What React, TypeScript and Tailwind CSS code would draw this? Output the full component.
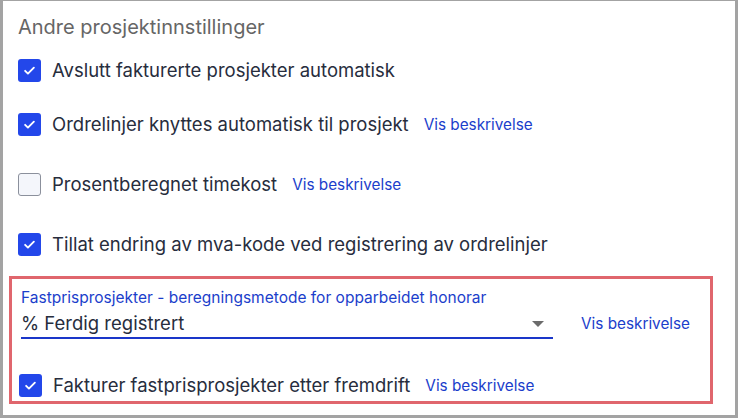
import React, { useState } from 'react';

const CheckIcon = () => (
  <svg viewBox="0 0 24 24" className="w-[15px] h-[15px]" fill="none" stroke="white" strokeWidth={3} strokeLinecap="round" strokeLinejoin="round">
    <path d="M5 12.5l4.5 4.5L19 7.5" />
  </svg>
);

interface CheckRowProps {
  label: string;
  checked: boolean;
  onToggle: () => void;
  showLink?: boolean;
  className?: string;
}

const CheckRow: React.FC<CheckRowProps> = ({ label, checked, onToggle, showLink, className }) => (
  <div className={`flex items-center ${className ?? ''}`}>
    <button
      type="button"
      onClick={onToggle}
      className={`w-[23px] h-[23px] shrink-0 rounded-[3px] flex items-center justify-center ${
        checked ? 'bg-[#2347ea]' : 'bg-[#f4f6fb] border border-[#8b909c]'
      }`}
    >
      {checked && <CheckIcon />}
    </button>
    <span className="ml-[11px] text-[18.5px] leading-[23px] text-[#272d3d]">{label}</span>
    {showLink && (
      <a className="ml-[15px] text-[15.3px] leading-[23px] text-[#1b3ecb] cursor-pointer">Vis beskrivelse</a>
    )}
  </div>
);

export default function App() {
  // settings state
  const [settings, setSettings] = useState({
    avslutt: true,
    ordrelinjer: true,
    prosent: false,
    mva: true,
    fremdrift: true,
  });
  const [method] = useState('% Ferdig registrert');
  const toggle = (key: keyof typeof settings) =>
    setSettings({ ...settings, [key]: !settings[key] });

  return (
    <div
      className="w-[738px] h-[418px] bg-white border-[3px] border-t border-[#a3a3a3] overflow-hidden"
      style={{ fontFamily: 'Inter, "Noto Sans", sans-serif' }}
    >
      <div className="pl-[15px] pt-[13px] text-[20px] text-[#666666] leading-[26px]">Andre prosjektinnstillinger</div>

      <div className="pl-[15px]">
        <CheckRow className="mt-[19px]" label="Avslutt fakturerte prosjekter automatisk" checked={settings.avslutt} onToggle={() => toggle('avslutt')} />
        <CheckRow className="mt-[31px]" label="Ordrelinjer knyttes automatisk til prosjekt" showLink checked={settings.ordrelinjer} onToggle={() => toggle('ordrelinjer')} />
        <CheckRow className="mt-[37px]" label="Prosentberegnet timekost" showLink checked={settings.prosent} onToggle={() => toggle('prosent')} />
        <CheckRow className="mt-[37px]" label="Tillat endring av mva-kode ved registrering av ordrelinjer" checked={settings.mva} onToggle={() => toggle('mva')} />
      </div>

      {/* highlighted section */}
      <div className="ml-[6px] mt-[20px] w-[704px] h-[128px] border-[3px] border-[#e0666d] pl-[4px]">
        <div className="flex items-end">
          <div className="w-[532px] ml-[5px]">
            <div className="pt-[9px] text-[15.5px] leading-[20px] text-[#1b3ecb]">
              Fastprisprosjekter - beregningsmetode for opparbeidet honorar
            </div>
            <div className="flex items-center justify-between h-[31px] pt-[3px] border-b-[2px] border-[#1a36c9]">
              <span className="text-[18.5px] text-[#272d3d]">{method}</span>
              <svg viewBox="0 0 12 6" className="w-[12px] h-[6px] mr-[9px]">
                <path d="M0 0h12L6 6z" fill="#6b6b6b" />
              </svg>
            </div>
          </div>
          <a className="ml-[28px] mb-[4px] text-[15.3px] leading-[23px] text-[#1b3ecb] cursor-pointer">Vis beskrivelse</a>
        </div>
        <CheckRow
          className="mt-[35px] ml-[3px]"
          label="Fakturer fastprisprosjekter etter fremdrift"
          showLink
          checked={settings.fremdrift}
          onToggle={() => toggle('fremdrift')}
        />
      </div>
    </div>
  );
}
